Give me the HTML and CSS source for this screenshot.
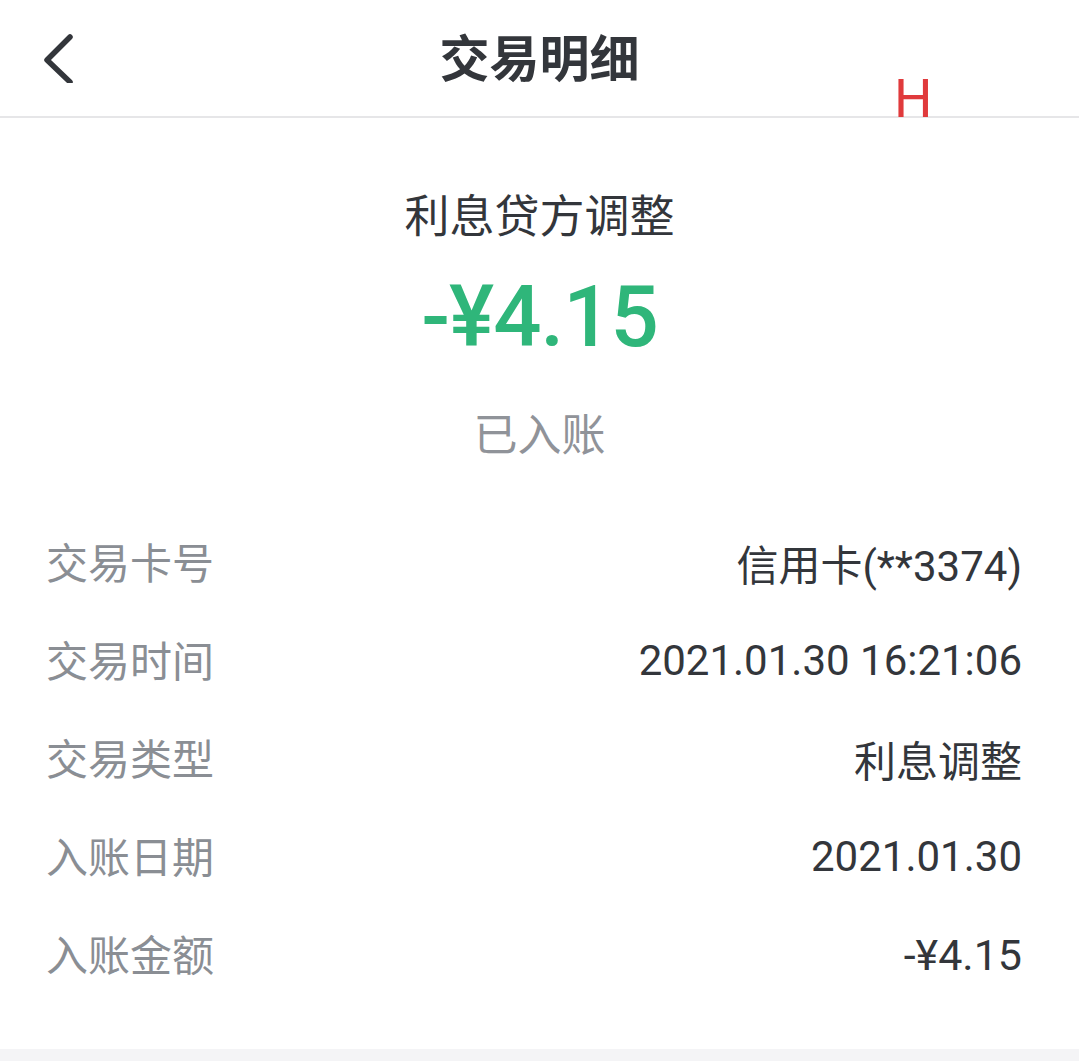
FILE: index.html
```html
<!DOCTYPE html>
<html lang="zh-CN">
<head>
  <meta charset="UTF-8">
  <meta name="viewport" content="width=device-width, initial-scale=1.0">
  <title>交易明细</title>
  <link rel="stylesheet" href="styles.css">
</head>
<body>
  <div class="header">
    <div class="back">
      <svg width="34" height="50" viewBox="0 0 34 50">
        <polyline points="29,4 6,27 29,49" fill="none" stroke="#33363b" stroke-width="5.5" stroke-linecap="round" stroke-linejoin="round"/>
      </svg>
    </div>
    <div class="title">交易明细</div>
    <div></div>
    <span class="mark">H</span>
  </div>

  <div class="summary">
    <div class="kind">利息贷方调整</div>
    <div class="amount">-¥4.15</div>
    <div class="status">已入账</div>
  </div>

  <div class="list">
    <div class="row"><span class="label">交易卡号</span><span class="value">信用卡(**3374)</span></div>
    <div class="row"><span class="label">交易时间</span><span class="value">2021.01.30 16:21:06</span></div>
    <div class="row"><span class="label">交易类型</span><span class="value">利息调整</span></div>
    <div class="row"><span class="label">入账日期</span><span class="value">2021.01.30</span></div>
    <div class="row"><span class="label">入账金额</span><span class="value money">-¥4.15</span></div>
  </div>

  <div class="footer"></div>
</body>
</html>
```

FILE: styles.css
```css
body {
  margin: 0;
  background-color: #ffffff;
  font-family: Roboto, "Noto Sans CJK SC", sans-serif;
  color: #33363b;
}
.header {
  position: relative;
  display: grid;
  grid-template-columns: 1fr auto 1fr;
  align-items: center;
  height: 116px;
  border-bottom: 2px solid #e6e6e8;
}
.back {
  padding-left: 41px;
  padding-top: 4px;
}
.title {
  font-family: "Noto Sans CJK SC", sans-serif;
  font-size: 50px;
  font-weight: 700;
  line-height: 60px;
  padding-bottom: 6px;
}
.mark {
  position: absolute; /* 盖在分割线上 */
  left: 894px;
  top: 71px;
  font-family: Roboto, sans-serif;
  font-size: 54px;
  font-weight: 400;
  line-height: 56px;
  color: #e03a3c;
}
.summary {
  display: flex;
  flex-direction: column;
  align-items: center;
  padding-top: 66px;
}
.kind {
  font-family: "Noto Sans CJK SC", sans-serif;
  font-size: 45px;
  line-height: 60px;
}
.amount {
  margin-top: 23px;
  font-family: Roboto, sans-serif;
  font-size: 85px;
  font-weight: 500;
  letter-spacing: -1px;
  line-height: 100px;
  color: #2fb67a;
}
.status {
  margin-top: 35px;
  font-family: "Noto Sans CJK SC", sans-serif;
  font-size: 44px;
  line-height: 60px;
  color: #909399;
}
.list {
  margin-top: 49px;
  padding: 0 57px 0 46px;
}
.row {
  display: flex;
  justify-content: space-between;
  align-items: center;
  height: 98px;
  font-size: 42px;
}
.label {
  font-family: "Noto Sans CJK SC", sans-serif;
  color: #8a8e94;
}
.value {
  padding-top: 5px;
  color: #33363b;
}
.money {
  font-size: 43px;
}
.footer {
  margin-top: 48px;
  height: 20px;
  background-color: #f4f4f6;
}
```
